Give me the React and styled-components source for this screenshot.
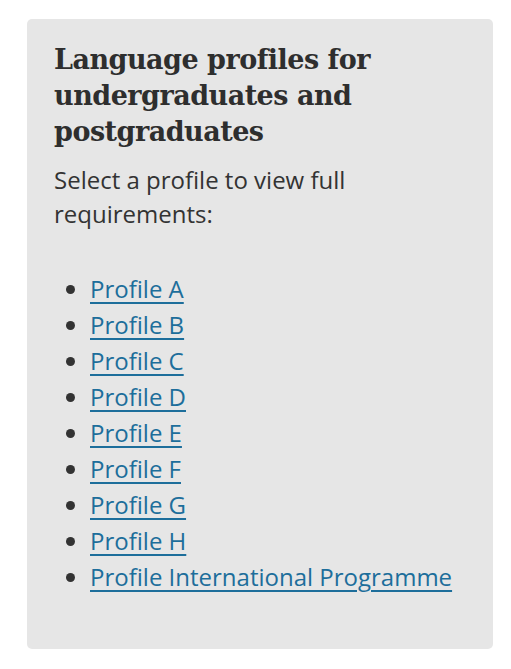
import styled, { createGlobalStyle } from "styled-components";

const GlobalStyle = createGlobalStyle`
  body {
    margin: 0;
    background: #ffffff;
    font-family: "Open Sans", "Liberation Sans", sans-serif;
  }
`;

const Page = styled.div`
  padding: 19px 18px 20px 27px;
`;

const Panel = styled.section`
  width: 466px;
  box-sizing: border-box;
  background: #e6e6e6;
  border-radius: 5px;
  padding: 23px 27px 54px 27px;
  color: #333333;
`;

const Title = styled.h2`
  margin: 0 0 13px;
  font-family: "DejaVu Serif", "Liberation Serif", serif;
  font-weight: 700;
  font-size: 27px;
  line-height: 36px;
  letter-spacing: -0.5px;
  color: #2e2e2e;
`;

const Intro = styled.p`
  margin: 0 0 40px;
  font-size: 24px;
  line-height: 34px;
`;

const List = styled.ul`
  margin: 0;
  padding: 0 0 0 36px;
`;

const Item = styled.li`
  font-size: 24px;
  line-height: 36px;
`;

const ProfileLink = styled.a`
  color: #1d6e9b;
  text-decoration: underline;
  text-decoration-thickness: 2px;
  text-underline-offset: 4px;
`;

const profiles = [
  "Profile A",
  "Profile B",
  "Profile C",
  "Profile D",
  "Profile E",
  "Profile F",
  "Profile G",
  "Profile H",
  "Profile International Programme",
];

const App = () => {
  return (
    <>
      <GlobalStyle />
      <Page>
        <Panel>
          <Title>Language profiles for undergraduates and postgraduates</Title>
          <Intro>Select a profile to view full requirements:</Intro>
          <List>
            {profiles.map((p) => (
              <Item key={p}>
                <ProfileLink href="#">{p}</ProfileLink>
              </Item>
            ))}
          </List>
        </Panel>
      </Page>
    </>
  );
};

export default App;
